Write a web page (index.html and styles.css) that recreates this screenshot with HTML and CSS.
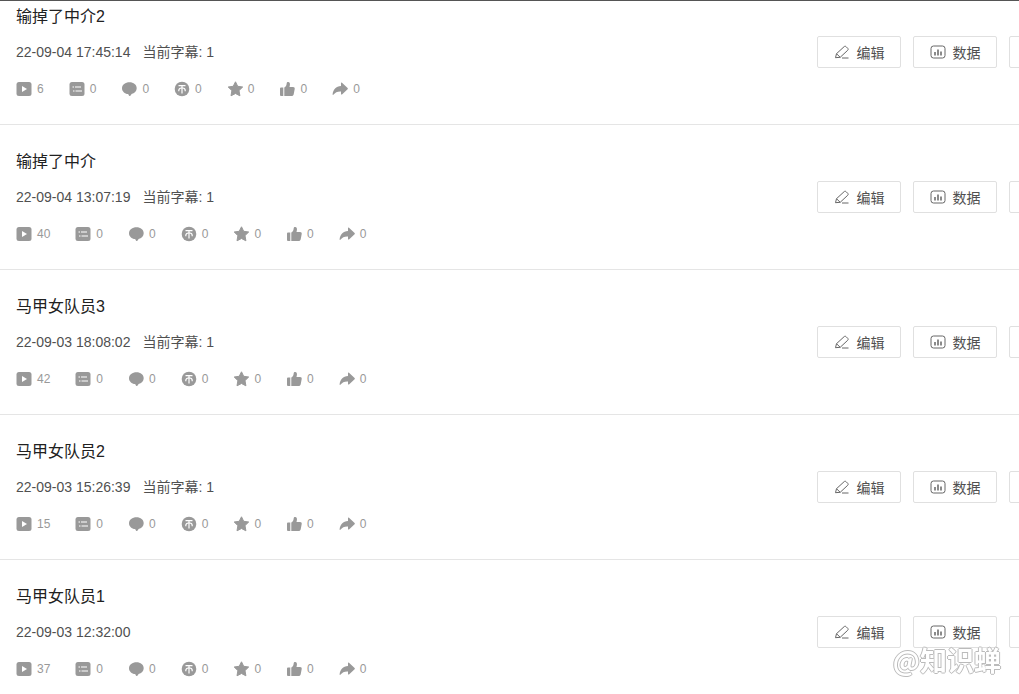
FILE: index.html
```html
<!DOCTYPE html>
<html lang="zh-CN">
<head>
  <meta charset="UTF-8">
  <meta name="viewport" content="width=device-width, initial-scale=1.0">
  <title>稿件管理</title>
  <link rel="stylesheet" href="styles.css">
</head>
<body>
  <svg class="sprite" aria-hidden="true">
    <symbol id="play" viewBox="0 0 16 16">
      <rect x=".5" y="1" width="15" height="14" rx="2.5"/>
      <path fill="#fff" d="M6 5v6l5-3z"/>
    </symbol>
    <symbol id="danmu" viewBox="0 0 16 16">
      <rect x=".5" y="1" width="15" height="14" rx="2.5"/>
      <path class="cut" d="M3.500 6H5M6 6h6M4 10h1.500M6.500 10H13"/>
    </symbol>
    <symbol id="comment" viewBox="0 0 16 16">
      <path d="M8.500 1.300c4.100 0 7.200 2.600 7.200 5.900 0 2.800-2.200 5-5.200 5.700-.6 1.300-1.300 2.100-2 2.100-.5 0-.9-.9-1.300-1.900C3.600 12.700 1 10.300 1 7.200c0-3.300 3.400-5.900 7.500-5.900z"/>
    </symbol>
    <symbol id="coin" viewBox="0 0 16 16">
      <circle cx="8" cy="8" r="7.300"/>
      <path class="cut" d="M4.500 4.600h7M8 4.600v8M4.800 10.200V9.500A2.500 2.500 0 0 1 7.300 7h1.400a2.500 2.500 0 0 1 2.500 2.500v.7"/>
    </symbol>
    <symbol id="star" viewBox="0 0 16 16">
      <path d="M8.500.8l2.200 4.500 5 .7-3.700 3.600.9 5.200-4.400-2.300L4 14.800l.9-5.200L1.200 6l5-.7z" stroke="currentColor" stroke-linejoin="round"/>
    </symbol>
    <symbol id="like" viewBox="0 0 16 16">
      <path d="M2 6.500h2.300V15H2q-1 0-1-1V7.500q0-1 1-1zM5.300 6.500C7 5.500 7.600 4 7.700 2.200 7.800 1.200 8.400.8 9.200.9c1.500.2 2 1.500 1.700 3L10.500 6H14c1.400 0 1.900.9 1.700 2l-1 5.200c-.2 1.200-1 1.800-2.100 1.800H5.300z"/>
    </symbol>
    <symbol id="share" viewBox="0 0 16 16">
      <path d="M9 2.200c0-.6.500-.8 1-.4l5.600 5.300c.4.400.4.800 0 1.200L10 13.400c-.5.400-1 .2-1-.4v-2.600c-3.500-.2-5.700.9-7.700 3.400-.3.400-.7.200-.7-.3C1 8.500 4 5.400 9 4.900z"/>
    </symbol>
    <symbol id="edit" viewBox="0 0 16 16">
      <path d="M1.500 13.700l1-4 7.600-7c.6-.6 1.400-.6 2 0l1.600 1.600c.6.600.6 1.400 0 2l-7.500 7zM2.500 9.700l3.700 3.600M8 14h6.500"/>
    </symbol>
    <symbol id="data" viewBox="0 0 16 16">
      <rect x="1" y="2" width="14" height="12" rx="2.500"/>
      <path stroke-width="1.500" d="M5 8v3.500M8 5.500v6M11 7.500v4"/>
    </symbol>
  </svg>

  <main class="list" id="list"></main>
  <div class="watermark">@知识蝉</div>

  <script>
    const videos = [
      { title: '输掉了中介2', time: '22-09-04 17:45:14', subtitles: 1, plays: 6 },
      { title: '输掉了中介', time: '22-09-04 13:07:19', subtitles: 1, plays: 40 },
      { title: '马甲女队员3', time: '22-09-03 18:08:02', subtitles: 1, plays: 42 },
      { title: '马甲女队员2', time: '22-09-03 15:26:39', subtitles: 1, plays: 15 },
      { title: '马甲女队员1', time: '22-09-03 12:32:00', subtitles: 0, plays: 37 }
    ];
    const icons = ['play', 'danmu', 'comment', 'coin', 'star', 'like', 'share'];

    function icon(name) {
      return `<svg class="icon" aria-hidden="true"><use href="#${name}"/></svg>`;
    }

    function renderVideo(v) {
      const stats = icons.map(name =>
        `<li class="stat">${icon(name)}<span>${name === 'play' ? v.plays : 0}</span></li>`
      ).join('');
      return `
        <article class="video">
          <div class="info">
            <h2 class="title">${v.title}</h2>
            <div class="meta">
              <span>${v.time}</span>
              ${v.subtitles ? `<span>当前字幕: ${v.subtitles}</span>` : ''}
            </div>
            <ul class="stats">${stats}</ul>
          </div>
          <div class="actions">
            <button class="btn" type="button">${icon('edit')}编辑</button>
            <button class="btn" type="button">${icon('data')}数据</button>
            <button class="btn" type="button" aria-label="更多"></button>
          </div>
        </article>`;
    }

    document.getElementById('list').innerHTML = videos.map(renderVideo).join('');
  </script>
</body>
</html>
```
FILE: styles.css
```css
* {
  box-sizing: border-box;
}
body {
  margin: 0;
  background: #fff;
  font-family: "Liberation Sans", Arial, "Noto Sans CJK SC", sans-serif;
  color: #505050;
}
.sprite {
  display: none;
}
.list {
  height: 100vh;
  overflow: hidden;
  border-top: 1px solid #555;
}
.video {
  display: flex;
  justify-content: space-between;
  padding: 25px 0 23px 16px;
  border-bottom: 1px solid #e5e5e5;
}
.video:first-child {
  padding-top: 4px;
}
.info {
  display: flex;
  flex-direction: column;
  gap: 11px;
}
.title {
  margin: 0;
  font-size: 16px;
  font-weight: normal;
  line-height: 24px;
  color: #212121;
}
.meta {
  display: flex;
  gap: 12px;
  font-size: 14px;
  line-height: 24px;
}
.stats {
  display: flex;
  gap: 25px;
  margin: 0;
  padding: 2px 0 0;
  list-style: none;
  font-size: 12px;
  line-height: 24px;
  color: #999;
}
.stat {
  display: flex;
  align-items: center;
  gap: 5px;
}
.icon {
  flex: none;
  width: 16px;
  height: 16px;
  fill: currentColor;
}
.cut {
  fill: none;
  stroke: #fff;
  stroke-width: 1.2;
}
/* the row of buttons runs on past the right edge */
.actions {
  display: flex;
  gap: 12px;
  width: 202px;
  padding-top: 31px;
  overflow: hidden;
}
.btn {
  display: flex;
  flex: none;
  align-items: center;
  justify-content: center;
  gap: 7px;
  width: 84px;
  height: 32px;
  padding: 0 0 1px;
  border: 1px solid #e0e0e0;
  border-radius: 2px;
  background: #fff;
  font-family: inherit;
  font-size: 14px;
  color: #505050;
  cursor: pointer;
}
.btn .icon {
  fill: none;
  stroke: #666;
}
.watermark {
  position: fixed;
  right: 18px;
  bottom: 14px;
  font-family: "Noto Sans CJK SC", sans-serif;
  font-size: 27px;
  font-weight: bold;
  line-height: 40px;
  color: #fff;
  text-shadow: 1px 0 #bbb, -1px 0 #bbb, 0 1px #bbb, 0 -1px #bbb;
}
```
